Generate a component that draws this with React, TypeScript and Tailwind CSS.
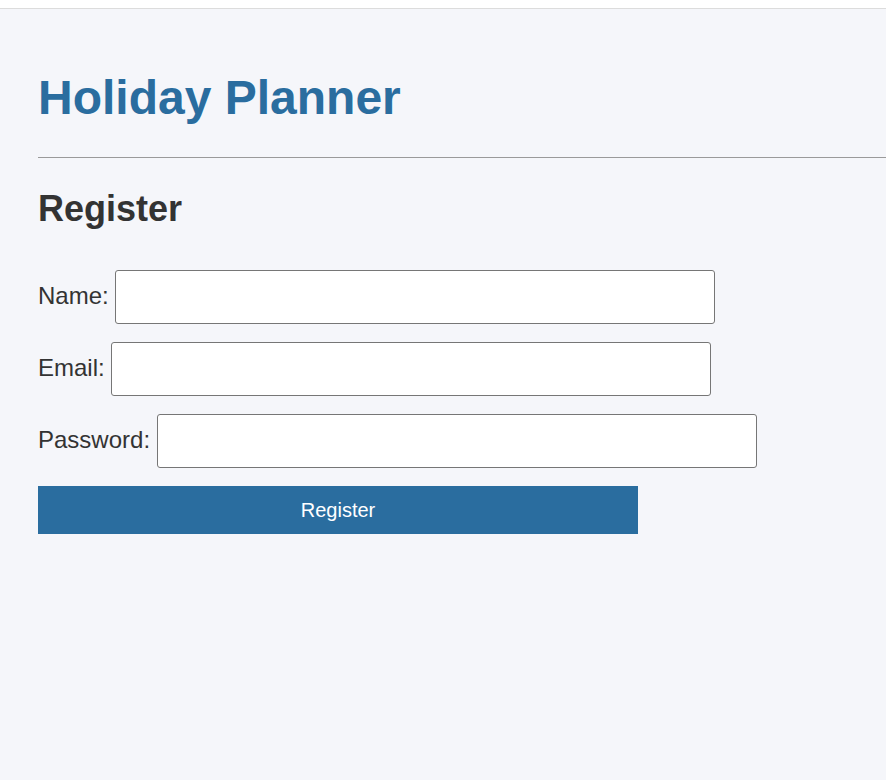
export default function App() {
  return (
    <div className="min-h-screen flex flex-col bg-[#f5f6fa] font-['Liberation_Sans',Arial,sans-serif] text-[#333]">
      <div className="h-[9px] shrink-0 bg-white border-b border-[#dcdcdc]" />

      <main className="flex-1 pl-[38px] pt-[61px]">
        <h1 className="text-[48px] leading-[55px] font-bold text-[#2a6d9f]">Holiday Planner</h1>
        <hr className="mt-[32px] border-0 border-t border-[#9a9a9a]" />

        <h2 className="mt-[30px] text-[36px] leading-[41px] font-bold text-[#333]">Register</h2>

        <form className="mt-[41px] flex flex-col gap-[18px]" onSubmit={(e) => e.preventDefault()}>
          <div className="flex items-center gap-[6.5px] text-[24px]">
            <label htmlFor="name" className="-mt-[2px]">Name:</label>
            <input id="name" type="text" className="w-[600px] h-[54px] bg-white border border-[#767676] rounded-[3px]" />
          </div>
          <div className="flex items-center gap-[6.5px] text-[24px]">
            <label htmlFor="email" className="-mt-[2px]">Email:</label>
            <input id="email" type="email" className="w-[600px] h-[54px] bg-white border border-[#767676] rounded-[3px]" />
          </div>
          <div className="flex items-center gap-[6.5px] text-[24px]">
            <label htmlFor="password" className="-mt-[2px]">Password:</label>
            <input id="password" type="password" className="w-[600px] h-[54px] bg-white border border-[#767676] rounded-[3px]" />
          </div>
          <button
            type="submit"
            className="w-[600px] h-[48px] bg-[#2a6d9f] text-white text-[20px]"
          >
            Register
          </button>
        </form>
      </main>
    </div>
  );
}
